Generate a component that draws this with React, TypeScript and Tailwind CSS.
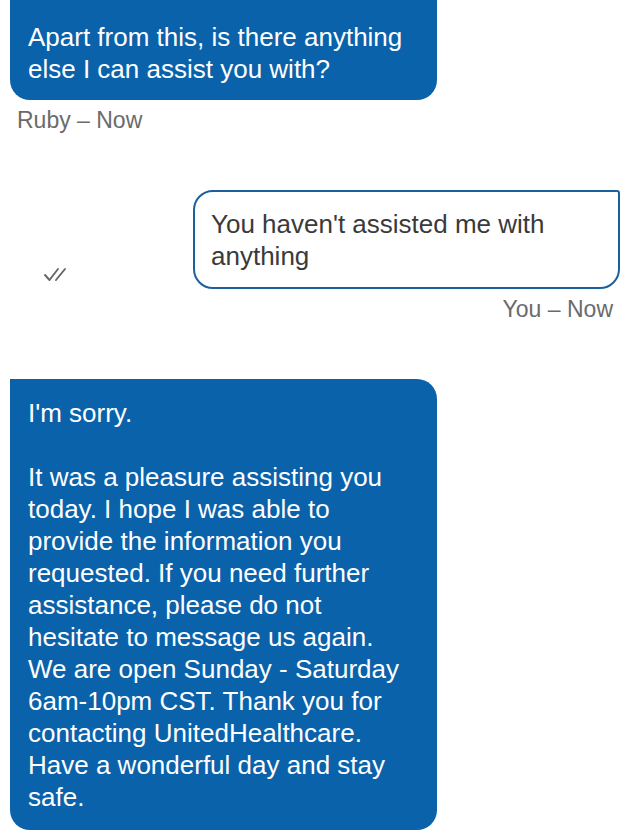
import { ReactNode } from "react"

const font = { fontFamily: '"Liberation Sans", Arial, sans-serif' }

function BotBubble({ children, cut }: { children: ReactNode; cut?: boolean }) {
  return (
    <div
      className={
        "w-[427px] bg-[#0a62ab] px-[18px] text-[26px] leading-[32px] text-white " +
        (cut
          ? "pt-[21px] pb-[15px] rounded-b-[20px]"
          : "pt-[18px] pb-[17px] rounded-[20px] rounded-tl-none")
      }
    >
      {children}
    </div>
  )
}

function DoubleCheck() {
  return (
    <svg width="27" height="15" viewBox="0 0 27 15" fill="none" stroke="#666" strokeWidth="1.9" strokeLinecap="round" strokeLinejoin="round">
      <path d="M2 8 L6.5 13 L15 2" />
      <path d="M13 13 L22 2" />
    </svg>
  )
}

export default function App() {
  return (
    <div className="min-h-[834px] w-[628px] overflow-hidden bg-white" style={font}>
      <div className="flex flex-col px-[10px]">
        <BotBubble cut>Apart from this, is there anything else I can assist you with?</BotBubble>
        <p className="mt-[8px] pl-[7px] text-[23px] leading-[24px] text-[#6b6b6b]">Ruby – Now</p>

        <div className="mt-[58px] flex items-end justify-between">
          <div className="pb-[7px] pl-[33px]">
            <DoubleCheck />
          </div>
          <div className="mr-[-2px] w-[427px] rounded-[20px] rounded-tr-[3px] border-2 border-[#1c5f9f] px-[16px] pt-[16px] pb-[15px] text-[26px] leading-[32px] text-[#3a3a3a]">
            You haven't assisted me with anything
          </div>
        </div>
        <p className="mt-[8px] pr-[5px] text-right text-[23px] leading-[24px] text-[#6b6b6b]">You – Now</p>

        <div className="mt-[58px]">
          <BotBubble>
            <p>I'm sorry.</p>
            <p className="mt-[32px]">
              It was a pleasure assisting you today. I hope I was able to provide the information you requested. If you need further assistance, please do not hesitate to message us again. We are open Sunday - Saturday 6am-10pm CST. Thank you for contacting UnitedHealthcare. Have a wonderful day and stay safe.
            </p>
          </BotBubble>
        </div>
      </div>
    </div>
  )
}
